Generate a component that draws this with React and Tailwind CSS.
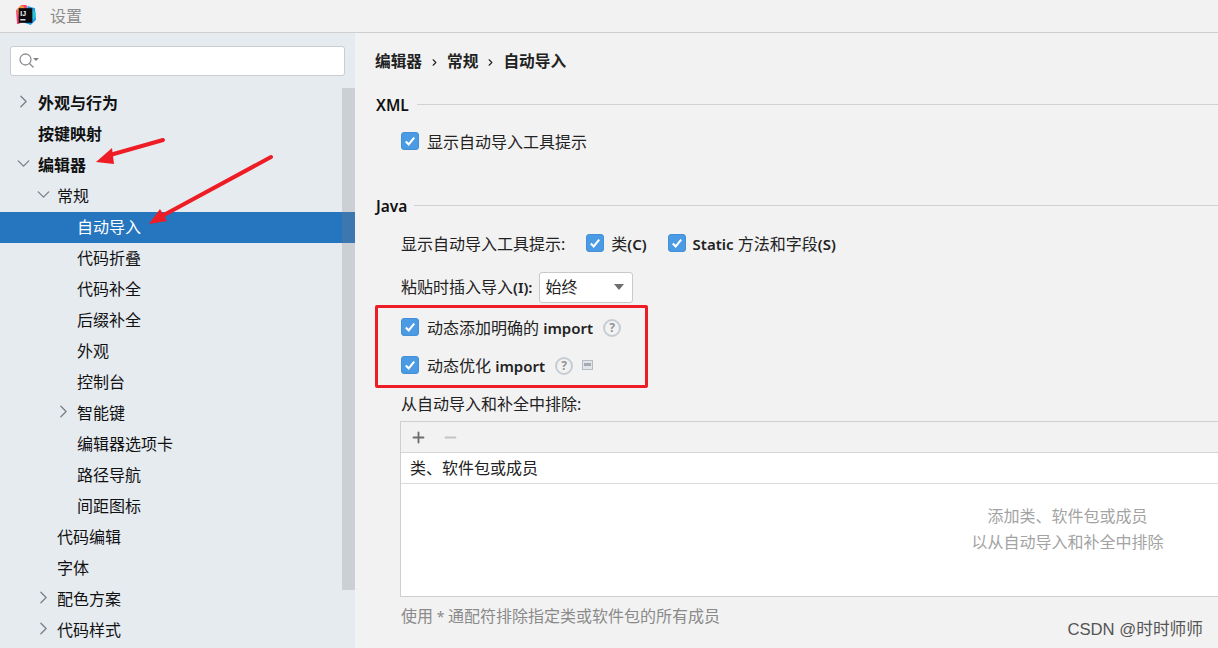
import React from "react";
import { ChevronRight, ChevronDown, Plus, Minus } from "lucide-react";

const tree = [
  { label: "外观与行为", depth: 0, bold: true, arrow: "right" },
  { label: "按键映射", depth: 0, bold: true },
  { label: "编辑器", depth: 0, bold: true, arrow: "down" },
  { label: "常规", depth: 1, arrow: "down" },
  { label: "自动导入", depth: 2, selected: true },
  { label: "代码折叠", depth: 2 },
  { label: "代码补全", depth: 2 },
  { label: "后缀补全", depth: 2 },
  { label: "外观", depth: 2 },
  { label: "控制台", depth: 2 },
  { label: "智能键", depth: 2, arrow: "right" },
  { label: "编辑器选项卡", depth: 2 },
  { label: "路径导航", depth: 2 },
  { label: "间距图标", depth: 2 },
  { label: "代码编辑", depth: 1 },
  { label: "字体", depth: 1 },
  { label: "配色方案", depth: 1, arrow: "right" },
  { label: "代码样式", depth: 1, arrow: "right" },
];

function TreeRow({ item }) {
  const pad = item.depth === 0 ? "pl-[38px]" : item.depth === 1 ? "pl-[57px]" : "pl-[77px]";
  const arrowPos = item.depth === 0 ? "left-[13px]" : item.depth === 1 ? "left-[33px]" : "left-[53px]";
  const Icon = item.arrow === "down" ? ChevronDown : ChevronRight;
  return (
    <div
      className={`relative h-[31px] shrink-0 flex items-center pb-[2px] text-[16px] ${pad} ${
        item.selected ? "bg-[#2675bf] text-white" : "text-[#111]"
      } ${item.bold ? "font-bold" : ""}`}
    >
      {item.arrow && (
        <Icon size={21} strokeWidth={1.5} className={`absolute top-[3px] text-[#7b7f85] ${arrowPos}`} />
      )}
      {item.label}
    </div>
  );
}

function Check({ className = "" }) {
  return (
    <span className={`w-[18px] h-[18px] -translate-y-[1px] rounded-[3px] bg-[#4b9ae4] border border-[#4390d8] flex items-center justify-center shrink-0 ${className}`}>
      <svg width="12" height="12" viewBox="0 0 12 12" fill="none">
        <path d="M1.8 6.4 4.7 9.4 10.2 2.6" stroke="#fff" strokeWidth="2.1" />
      </svg>
    </span>
  );
}

function Help() {
  return (
    <span className="w-[18px] h-[18px] rounded-full border-2 border-[#c6ccd2] text-[#8f959b] text-[12px] font-bold flex items-center justify-center shrink-0 leading-none">
      ?
    </span>
  );
}

function SectionTitle({ title, gap }) {
  return (
    <div className={`flex items-center ${gap}`}>
      <span className="font-semibold text-[#111] text-[15.5px] leading-[20px]">{title}</span>
      <span className="flex-1 h-[1px] bg-[#d1d1d1] -translate-y-[1px]" />
    </div>
  );
}

export default function App() {
  return (
    <div className="w-[1218px] h-[648px] overflow-hidden relative flex flex-col bg-[#f2f2f2] text-[16px] font-['Noto_Sans','Noto_Sans_CJK_SC',sans-serif]">
      {/* title bar */}
      <div className="h-[33px] shrink-0 border-b border-[#cfcfcf] flex items-center pl-[15px] bg-[#f2f2f2]">
        <svg width="21" height="21" viewBox="0 0 20 20" className="-translate-y-[1px]">
          <path d="M1 5 6 0h5l1 6-8 12H2z" fill="#fc3d6e" />
          <path d="M2 4 7 0l3 4-7 6z" fill="#fb9b2c" />
          <path d="M12 1l7 2 1 11-5 5-6-2z" fill="#1a9be8" />
          <path d="M16 3l4 5-2 6-5-3z" fill="#27c6d9" />
          <rect x="3.5" y="3" width="13" height="14" fill="#0b0b0f" />
          <text x="5" y="10" fill="#fff" fontSize="6.5" fontWeight="700" fontFamily="Liberation Sans, sans-serif">IJ</text>
          <rect x="5" y="13.5" width="5" height="1.2" fill="#fff" />
        </svg>
        <span className="ml-[14px] text-[#8c8c8c] text-[16px]">设置</span>
      </div>

      <div className="flex flex-1 min-h-0">
        {/* sidebar */}
        <aside className="w-[355px] shrink-0 bg-[#e6ebf0] flex flex-col relative">
          <div className="mt-[13px] ml-[10px] mr-[10px] h-[30px] shrink-0 bg-white rounded-[3px] border border-[#c9cdd2] flex items-center pl-[7px]">
            <svg width="22" height="18" viewBox="0 0 22 18" fill="none">
              <circle cx="7.5" cy="7.5" r="5.5" stroke="#8e9297" strokeWidth="1.3" />
              <path d="M11.5 11.5 15.5 15.5" stroke="#8e9297" strokeWidth="1.5" />
              <path d="M15 6h6l-3 3z" fill="#7d8186" />
            </svg>
          </div>
          <div className="mt-[12px] flex flex-col overflow-hidden">
            {tree.map((item) => (
              <TreeRow key={item.label} item={item} />
            ))}
          </div>
          {/* scrollbar thumb */}
          <div className="absolute right-0 top-[55px] w-[13px] h-[502px] bg-[#7f8083]/25" />
        </aside>

        {/* settings page */}
        <main className="flex-1 min-w-0 pl-[21px] flex flex-col">
          <div className="mt-[17px] h-[24px] flex items-center font-semibold text-[15.7px] text-[#222] -ml-[1px]">
            编辑器
            <ChevronRight size={11} strokeWidth={2.4} className="mx-[7px]" />
            常规
            <ChevronRight size={11} strokeWidth={2.4} className="mx-[7px]" />
            自动导入
          </div>

          <SectionTitle title="XML" gap="mt-[21px] gap-[8px]" />
          <div className="mt-[15px] ml-[25px] flex items-center gap-[8px] h-[24px] text-[#222]">
            <Check />
            显示自动导入工具提示
          </div>

          <SectionTitle title="Java" gap="mt-[42px] gap-[7px]" />
          <div className="mt-[13px] ml-[25px] flex items-center h-[30px] text-[#222]">
            <span>显示自动导入工具提示:</span>
            <Check className="ml-[21px]" />
            <span className="ml-[7px]">类<b className="font-semibold text-[15px]">(C)</b></span>
            <Check className="ml-[21px]" />
            <span className="ml-[7px]"><b className="font-semibold text-[15px]">Static</b> 方法和字段<b className="font-semibold text-[15px]">(S)</b></span>
          </div>
          <div className="mt-[12px] ml-[25px] flex items-center h-[32px] text-[#222]">
            <span>粘贴时插入导入<b className="font-semibold text-[15px]">(I):</b></span>
            <div className="ml-[7px] w-[94px] h-[31px] bg-white border border-[#c9c9c9] rounded-[3px] flex items-center pl-[5px] pr-[8px] justify-between">
              始终
              <span className="w-0 h-0 border-l-[5px] border-r-[5px] border-t-[6px] border-l-transparent border-r-transparent border-t-[#6e6e6e]" />
            </div>
          </div>

          <div className="mt-[13px] ml-[25px] flex items-center h-[24px] text-[#222]">
            <Check className="mr-[8px]" />
            <span>动态添加明确的 <b className="font-semibold text-[15px]">import</b></span>
            <span className="ml-[10px]"><Help /></span>
          </div>
          <div className="mt-[14px] ml-[25px] flex items-center h-[24px] text-[#222]">
            <Check className="mr-[8px]" />
            <span>动态优化 <b className="font-semibold text-[15px]">import</b></span>
            <span className="ml-[10px]"><Help /></span>
            <span className="ml-[9px] w-[11px] h-[10px] -translate-y-[1px] border border-[#b5bcc3] bg-[#e2e5e8] flex justify-center pt-[2px]">
              <span className="w-[7px] h-[3px] bg-[#a4abb2]" />
            </span>
          </div>

          <div className="mt-[15px] ml-[25px] h-[22px] flex items-center text-[#222]">从自动导入和补全中排除:</div>

          <div className="mt-[6px] ml-[24px] h-[176px] bg-white border border-[#cfcfcf] border-r-0 flex flex-col shrink-0">
            <div className="h-[31px] bg-[#f2f2f2] border-b border-[#d4d4d4] flex items-center pl-[9px] gap-[15px] shrink-0">
              <Plus size={17} strokeWidth={2.6} className="text-[#6e6e6e]" />
              <Minus size={17} strokeWidth={2.6} className="text-[#c4c4c4]" />
            </div>
            <div className="h-[31px] border-b border-[#dcdcdc] flex items-center pl-[9px] text-[#222] shrink-0">类、软件包或成员</div>
            <div className="flex-1 flex flex-col items-center justify-center text-[#a3a3a3] leading-[26px] pb-[22px] pl-[516px]">
              <span>添加类、软件包或成员</span>
              <span>以从自动导入和补全中排除</span>
            </div>
          </div>

          <div className="mt-[8px] ml-[25px] h-[22px] flex items-center text-[#8a8a8a]">使用<span className="text-[14px]">&nbsp;*&nbsp;</span>通配符排除指定类或软件包的所有成员</div>
        </main>
      </div>

      {/* red annotations */}
      <div className="absolute left-[375px] top-[305px] w-[273px] h-[83px] border-[3px] border-[#ee1c25] rounded-[2px]" />
      <svg className="absolute left-0 top-0 pointer-events-none" width="360" height="250" fill="none">
        <path d="M163 140 110 155" stroke="#ee1c25" strokeWidth="4" strokeLinecap="round" />
        <path d="M96 162 112 148 114 164z" fill="#ee1c25" />
        <path d="M271 157 162 216" stroke="#ee1c25" strokeWidth="4" strokeLinecap="round" />
        <path d="M149 224 160 209 167 221z" fill="#ee1c25" />
      </svg>
      <div className="absolute right-[15px] top-[620px] text-[#555] text-[16.7px] leading-[20px] font-['Liberation_Sans','Noto_Sans_CJK_SC',sans-serif]">CSDN @时时师师</div>
    </div>
  );
}
